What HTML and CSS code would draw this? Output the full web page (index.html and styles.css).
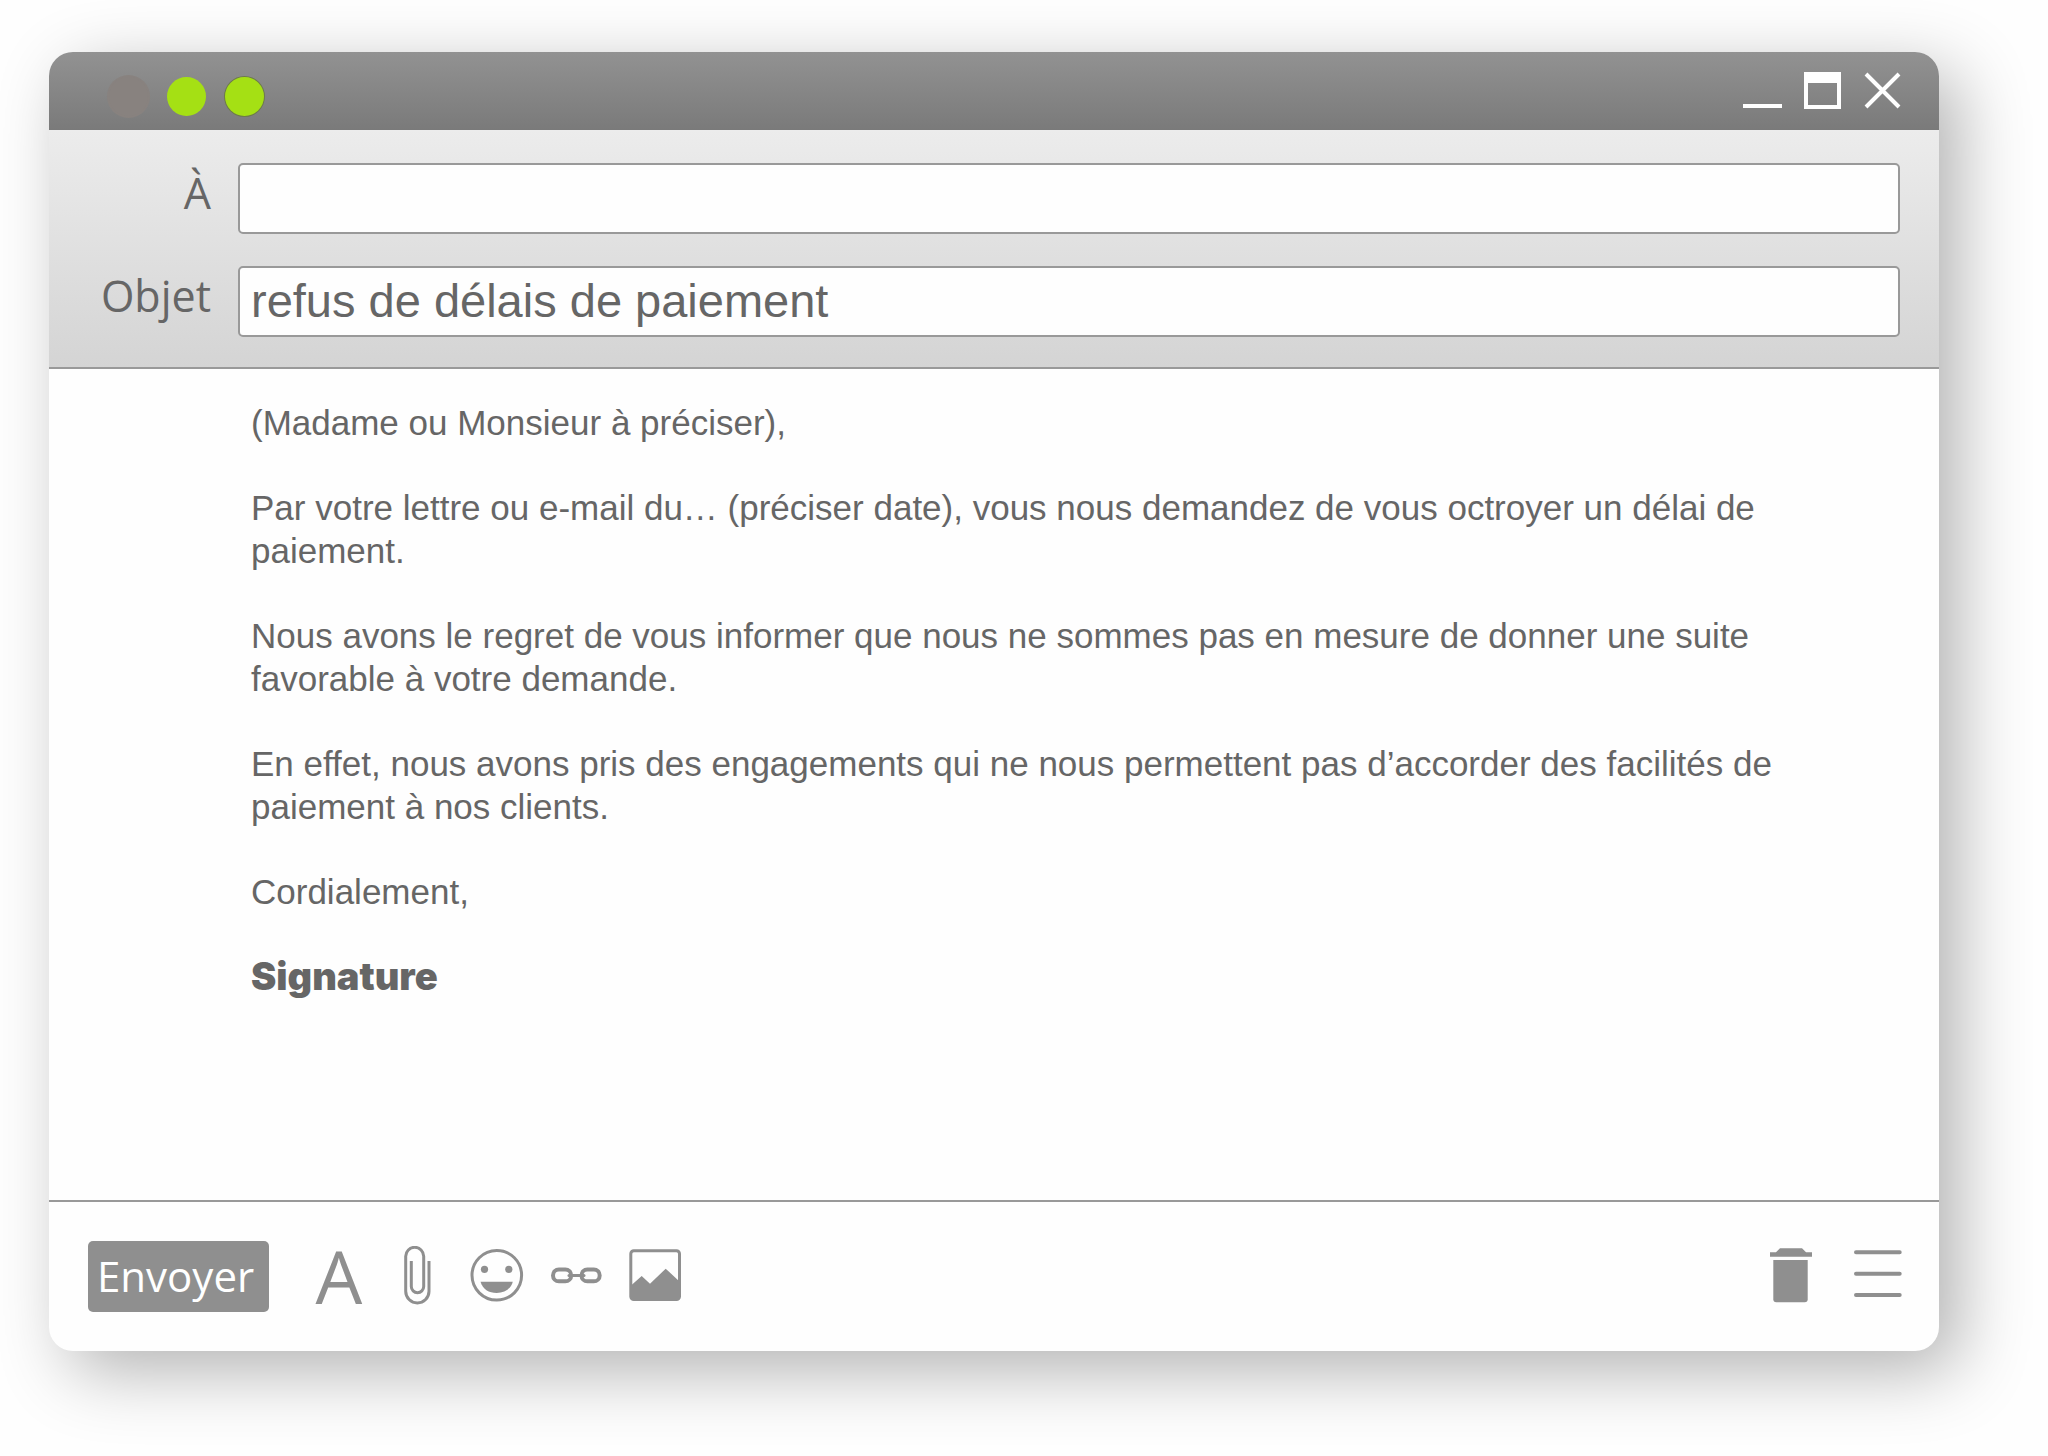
FILE: index.html
```html
<!DOCTYPE html>
<html lang="fr">
<head>
<meta charset="utf-8">
<meta name="viewport" content="width=device-width, initial-scale=1">
<title>refus de délais de paiement</title>
<link rel="stylesheet" href="styles.css">
</head>
<body>
<form class="window">
  <header class="titlebar">
    <div class="lights">
      <span class="light light-off"></span>
      <span class="light"></span>
      <span class="light light-ring"></span>
    </div>
    <div class="controls">
      <button type="button" class="control" aria-label="Réduire">
        <svg viewBox="0 0 40 40"><path d="M0 36H39" stroke-width="4"/></svg>
      </button>
      <button type="button" class="control" aria-label="Agrandir">
        <svg viewBox="0 0 40 40"><path fill="#fff" stroke="none" fill-rule="evenodd" d="M1 2H38V39H1ZM5 13V35H34V13Z"/></svg>
      </button>
      <button type="button" class="control" aria-label="Fermer">
        <svg viewBox="0 0 40 40"><path d="M3 4L36 37M36 4L3 37" stroke-width="4"/></svg>
      </button>
    </div>
  </header>

  <div class="fields">
    <label class="field-label" for="to">À</label>
    <input class="field" id="to" type="text">
    <label class="field-label" for="subject">Objet</label>
    <input class="field" id="subject" type="text" value="refus de délais de paiement">
  </div>

  <main class="message">
    <p>(Madame ou Monsieur à préciser),</p>
    <p>Par votre lettre ou e-mail du… (préciser date), vous nous demandez de vous octroyer un délai de paiement.</p>
    <p>Nous avons le regret de vous informer que nous ne sommes pas en mesure de donner une suite favorable à votre demande.</p>
    <p>En effet, nous avons pris des engagements qui ne nous permettent pas d’accorder des facilités de paiement à nos clients.</p>
    <p>Cordialement,</p>
    <p class="signature">Signature</p>
  </main>

  <footer class="toolbar">
    <button type="button" class="send">Envoyer</button>
    <div class="tools">
      <button type="button" class="tool tool-text" aria-label="Police">A</button>
      <button type="button" class="tool" aria-label="Joindre un fichier">
        <svg viewBox="0 0 60 60"><path class="line" d="M41 15V45.3A11.65 11.65 0 0 1 17.7 45.3V10.3A9 9 0 0 1 35.7 10.3V40.5A6.2 6.2 0 0 1 23.3 40.5V15"/></svg>
      </button>
      <button type="button" class="tool" aria-label="Insérer un émoticône">
        <svg viewBox="0 0 60 60"><circle class="line" cx="29.8" cy="29.3" r="24.8"/><circle cx="17.5" cy="23.3" r="3.6"/><circle cx="41.8" cy="23.3" r="3.6"/><path d="M13.5 35.7H45.8C44 43 37.5 47 29.7 47S15.5 43 13.5 35.7Z"/></svg>
      </button>
      <button type="button" class="tool" aria-label="Insérer un lien">
        <svg viewBox="0 0 60 60"><g class="line line-bold"><rect x="7" y="23.5" width="18.2" height="11.8" rx="5.9"/><rect x="35.5" y="23.5" width="18.2" height="11.8" rx="5.9"/><path stroke-width="3" stroke-linecap="round" d="M23 29.4H38"/></g></svg>
      </button>
      <button type="button" class="tool" aria-label="Insérer une image">
        <svg viewBox="0 0 60 60"><rect class="line" x="5.8" y="4.8" width="48.7" height="48.7" rx="3"/><path d="M6 39.5L16.7 30L25 37.7L40.7 22.7L54.5 35.5V53H6Z"/></svg>
      </button>
    </div>
    <div class="tools tools-end">
      <button type="button" class="tool" aria-label="Supprimer">
        <svg viewBox="0 0 60 60"><path d="M9 6.3H15L19 2.3H41L45 6.3H51V10.7H9Z"/><path d="M12.3 14H46.7V53.3Q46.7 56.3 43.7 56.3H15.3Q12.3 56.3 12.3 53.3Z"/></svg>
      </button>
      <button type="button" class="tool" aria-label="Menu">
        <svg viewBox="0 0 60 60"><path fill="none" stroke="#8f8f8f" stroke-width="4" stroke-linecap="round" d="M8 6.3H51.7M8 27.7H51.7M8 49H51.7"/></svg>
      </button>
    </div>
  </footer>
</form>
</body>
</html>
```
FILE: styles.css
```css
* {
  box-sizing: border-box;
}

body {
  display: flex;
  min-height: 100vh;
  margin: 0;
  padding: 52px 109px 105px 49px;
  background: #fefefe;
  color: #666;
  font-family: "Liberation Sans", Arial, sans-serif;
}

button {
  padding: 0;
  border: 0;
  background: none;
  cursor: pointer;
}

svg {
  display: block;
  width: 100%;
  height: 100%;
}

.window {
  display: flex;
  flex: 1;
  flex-direction: column;
  overflow: hidden;
  border-radius: 24px;
  background: #fefefe;
  box-shadow: 20px 20px 70px rgba(0, 0, 0, 0.3);
}

.titlebar {
  display: flex;
  align-items: center;
  justify-content: space-between;
  height: 78px;
  padding: 0 36px 0 60px;
  background: linear-gradient(#929292, #7a7a7a);
}

.lights {
  display: flex;
  gap: 19px;
  padding-top: 10px;
}

.light {
  width: 39px;
  height: 39px;
  border-radius: 50%;
  background: #a5e014;
}

.light-off {
  background: #88827f;
  box-shadow: 0 0 0 2px #88827f;
}

.light-ring {
  box-shadow: 0 0 0 1px #6d7a4a;
}

.controls {
  display: flex;
  gap: 20px;
  padding-bottom: 2px;
}

.control {
  width: 40px;
  height: 40px;
}

.control svg {
  fill: none;
  stroke: #fff;
}

.fields {
  display: grid;
  grid-template-columns: 162px 1fr;
  gap: 32px 27px;
  align-items: center;
  padding: 33px 39px 30px 0;
  border-bottom: 2px solid #999;
  background: linear-gradient(#ececec, #d4d4d4);
}

.field-label {
  padding-bottom: 11px;
  font: 43px/48px "Open Sans", "Noto Sans", sans-serif;
  text-align: right;
}

.field {
  width: 100%;
  height: 71px;
  padding: 0 11px 2px;
  border: 2px solid #999;
  border-radius: 5px;
  background: #fefefe;
  color: inherit;
  font: 47px "Liberation Sans", Arial, sans-serif;
}

.message {
  display: flex;
  flex: 1;
  flex-direction: column;
  gap: 42px;
  padding: 32px 100px 32px 202px;
  font-size: 35px;
  line-height: 43px;
}

.message p {
  margin: 0;
}

.message .signature {
  font-family: Inter, "Liberation Sans", sans-serif;
  font-size: 38px;
  font-weight: 900;
}

.toolbar {
  display: flex;
  align-items: center;
  gap: 40px;
  padding: 39px 31px 39px 39px;
  border-top: 2px solid #999;
}

.send {
  width: 181px;
  height: 71px;
  padding: 0 9px 2px;
  border-radius: 5px;
  background: #8f8f8f;
  color: #fff;
  font: 42px "Open Sans", "Noto Sans", sans-serif;
  text-align: left;
}

.tools {
  display: flex;
  gap: 19px;
  padding-bottom: 2px;
}

.tools-end {
  gap: 27px;
  margin-left: auto;
}

.tool {
  width: 60px;
  height: 60px;
  fill: #8f8f8f;
}

.tool-text {
  color: #8f8f8f;
  font: 500 74px/56px "Open Sans", "Noto Sans", sans-serif;
}

.line {
  fill: none;
  stroke: #8f8f8f;
  stroke-width: 3;
}

.line-bold {
  stroke-width: 4;
}
```
